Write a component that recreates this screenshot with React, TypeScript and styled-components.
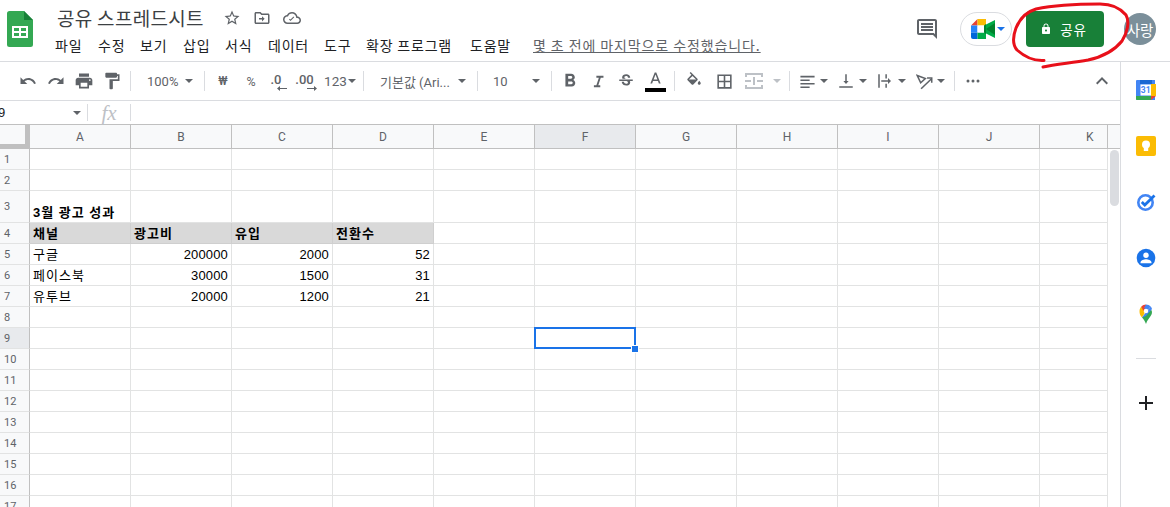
import React from "react";
import styled, { createGlobalStyle } from "styled-components";

const UI = `Roboto, "Noto Sans CJK KR", sans-serif`;
const CELL = `"Liberation Sans", "Noto Sans CJK KR", sans-serif`;
const HEADER_GRAY = "#5f6368";

const Global = createGlobalStyle`
  html, body { margin: 0; padding: 0; background: #fff; }
  #root { width: 1170px; height: 507px; overflow: hidden; }
`;

const Page = styled.div`
  position: relative;
  width: 1170px;
  height: 507px;
  overflow: hidden;
  display: flex;
  flex-direction: column;
  font-family: ${UI};
`;

const TopBar = styled.header`
  height: 61px;
  flex: none;
  display: flex;
  align-items: flex-start;
  border-bottom: 1px solid #dadce0;
  box-sizing: content-box;
`;
const LogoBox = styled.div`
  width: 26px;
  height: 36px;
  margin: 11px 22px 0 7px;
  flex: none;
`;
const TitleBlock = styled.div`
  display: flex;
  flex-direction: column;
  flex: 1;
  min-width: 0;
`;
const TitleRow = styled.div`
  display: flex;
  align-items: center;
  height: 24px;
  margin-top: 6px;
`;
const Title = styled.div`
  font-family: "Noto Sans CJK KR", sans-serif;
  font-size: 19px;
  line-height: 24px;
  color: #3c4043;
  width: 160px;
  margin-left: 2px;
  letter-spacing: 0.3px;
`;
const TitleIcon = styled.span`
  width: 30px;
  display: flex;
  justify-content: center;
  color: #5f6368;
`;
const MenuRow = styled.nav`
  display: flex;
  align-items: center;
  height: 22px;
  margin-top: 4px;
`;
const MenuItem = styled.span<{ $w: number }>`
  font-family: "Noto Sans CJK KR", sans-serif;
  font-size: 14px;
  letter-spacing: 0.8px;
  color: #202124;
  width: ${(p) => p.$w}px;
  white-space: nowrap;
`;
const LastEdit = styled.span`
  font-family: "Noto Sans CJK KR", sans-serif;
  font-size: 14px;
  letter-spacing: 0.9px;
  color: #5f6368;
  text-decoration: underline;
  white-space: nowrap;
  margin-left: 5px;
`;
const RightGroup = styled.div`
  display: flex;
  align-items: center;
  height: 36px;
  margin-top: 11px;
  flex: none;
`;
const CommentBtn = styled.span`
  display: flex;
  color: #5f6368;
  margin-right: 21px;
`;
const MeetPill = styled.div`
  width: 52px;
  height: 34px;
  border: 1px solid #dadce0;
  border-radius: 18px;
  display: flex;
  align-items: center;
  gap: 2px;
  padding-left: 10px;
  box-sizing: border-box;
  margin-right: 14px;
`;
const ShareButton = styled.button`
  width: 78px;
  height: 36px;
  background: #188038;
  border: none;
  border-radius: 4px;
  color: #fff;
  display: flex;
  align-items: center;
  justify-content: center;
  gap: 8px;
  padding: 0 3px 0 0;
  font-family: "Noto Sans CJK KR", sans-serif;
  font-size: 13.5px;
  letter-spacing: 0.9px;
  margin-right: 20px;
`;
const Avatar = styled.div`
  width: 32px;
  height: 32px;
  border-radius: 50%;
  background: #7b8f9a;
  color: #fff;
  font-family: "Noto Sans CJK KR", sans-serif;
  font-size: 14.5px;
  overflow: hidden;
  display: flex;
  align-items: center;
  justify-content: center;
  white-space: nowrap;
  margin-right: 14px;
`;

const Body = styled.div`
  flex: 1;
  display: flex;
  min-height: 0;
`;
const Main = styled.main`
  width: 1120px;
  flex: none;
  display: flex;
  flex-direction: column;
  min-height: 0;
`;
const SidePanel = styled.aside`
  flex: 1;
  border-left: 1px solid #dadce0;
  display: flex;
  flex-direction: column;
  align-items: center;
`;
const SideIcon = styled.div`
  height: 56px;
  flex: none;
  display: flex;
  align-items: center;
  justify-content: center;
`;
const SideDivider = styled.div`
  width: 20px;
  height: 1px;
  background: #dadce0;
  margin-top: 16px;
  margin-bottom: 16px;
`;

const Toolbar = styled.div`
  height: 38px;
  flex: none;
  display: flex;
  align-items: center;
  padding: 0 4px 0 14px;
  border-bottom: 1px solid #dadce0;
`;
const Tool = styled.span<{ $w?: number; $dim?: boolean }>`
  width: ${(p) => p.$w ?? 28}px;
  height: 24px;
  flex: none;
  display: flex;
  align-items: center;
  justify-content: center;
  color: ${(p) => (p.$dim ? "#bdc1c6" : "#5f6368")};
  font-size: 12.5px;
`;
const Sep = styled.span`
  width: 1px;
  height: 20px;
  background: #dadce0;
  margin: 0 4px;
  flex: none;
`;
const SelectTool = styled.span<{ $w: number; $pad: number }>`
  width: ${(p) => p.$w}px;
  padding-left: ${(p) => p.$pad}px;
  padding-right: 7px;
  box-sizing: border-box;
  flex: none;
  display: flex;
  align-items: center;
  justify-content: space-between;
  color: #5f6368;
  font-size: 13px;
  white-space: nowrap;
`;
const CaretGroup = styled.span`
  width: 39px;
  flex: none;
  display: flex;
  align-items: center;
  color: #5f6368;
`;
const CaretIcon = styled.span`
  width: 26px;
  display: flex;
  justify-content: center;
`;
const Caret = styled.span<{ $dim?: boolean; $blue?: boolean }>`
  width: 0;
  height: 0;
  flex: none;
  border-left: 4px solid transparent;
  border-right: 4px solid transparent;
  border-top: 4px solid ${(p) => (p.$blue ? "#1a73e8" : p.$dim ? "#bdc1c6" : "#5f6368")};
`;
const DecimalTool = styled.span<{ $w: number; $shift: number }>`
  width: ${(p) => p.$w}px;
  flex: none;
  display: flex;
  flex-direction: column;
  align-items: center;
  color: #5f6368;
  font-size: 13px;
  line-height: 13px;
  font-weight: 500;
  position: relative;
  top: 1px;
  svg {
    margin-left: ${(p) => p.$shift}px;
  }
`;
const DecimalText = styled.span<{ $shift: number }>`
  margin-left: ${(p) => p.$shift}px;
`;
const Spacer = styled.span`
  flex: 1;
`;
const NumTool = styled(Tool)`
  gap: 1px;
  font-size: 13.5px;
`;
const Won = styled.span`
  font-weight: 500;
  font-size: 12px;
`;
const ColorStack = styled.span`
  display: flex;
  flex-direction: column;
  align-items: center;
  color: #5f6368;
`;
const ColorBar = styled.span`
  width: 21px;
  height: 4px;
  background: #000;
  margin-top: -1px;
`;

const FormulaBar = styled.div`
  height: 23px;
  flex: none;
  display: flex;
  align-items: center;
  border-bottom: 1px solid #c0c0c0;
`;
const NameBox = styled.div`
  width: 87px;
  flex: none;
  display: flex;
  align-items: center;
  justify-content: space-between;
  padding-right: 6px;
  box-sizing: border-box;
  font-size: 13px;
  color: #202124;
  font-family: ${CELL};
`;
const NameText = styled.span`
  margin-left: -2px;
`;
const FormulaSep = styled.span`
  width: 1px;
  height: 17px;
  background: #dadce0;
  flex: none;
`;
const Fx = styled.span`
  width: 42px;
  text-align: center;
  font-family: "Liberation Serif", serif;
  font-style: italic;
  font-size: 21px;
  line-height: 20px;
  color: #bdc1c6;
`;

const Grid = styled.div`
  flex: 1;
  min-height: 0;
  position: relative;
  overflow: hidden;
  display: grid;
  grid-template-columns: 30px repeat(10, 101px) 68px 12px;
  grid-template-rows: 24px 21px 21px 32px repeat(14, 21px);
  font-family: ${CELL};
`;
const Corner = styled.div`
  background-color: #f8f9fa;
  background-image: linear-gradient(#c0c0c0, #c0c0c0), linear-gradient(#c0c0c0, #c0c0c0);
  background-size: 5px 22px, 30px 4px;
  background-position: 25px 0, 0 19px;
  background-repeat: no-repeat;
  border-right: 1px solid #c0c0c0;
  border-bottom: 1px solid #c0c0c0;
`;
const ColHead = styled.div<{ $sel?: boolean; $cut?: boolean }>`
  background: ${(p) => (p.$sel ? "#e8eaed" : "#f8f9fa")};
  border-right: 1px solid #c0c0c0;
  border-bottom: 1px solid #c0c0c0;
  color: ${HEADER_GRAY};
  font-family: ${UI};
  font-size: 12px;
  display: flex;
  align-items: center;
  justify-content: ${(p) => (p.$cut ? "flex-start" : "center")};
  padding-left: ${(p) => (p.$cut ? 46 : 0)}px;
`;
const RowHead = styled.div<{ $sel?: boolean }>`
  background: ${(p) => (p.$sel ? "#e8eaed" : "#f8f9fa")};
  border-right: 1px solid #c0c0c0;
  border-bottom: 1px solid #e2e3e3;
  color: ${HEADER_GRAY};
  font-family: ${UI};
  font-size: 11px;
  display: flex;
  align-items: center;
  padding-left: 4px;
`;
const Cell = styled.div<{ $bold?: boolean; $right?: boolean; $fill?: boolean }>`
  border-right: 1px solid ${(p) => (p.$fill ? "#cfcfcf" : "#e2e3e3")};
  border-bottom: 1px solid ${(p) => (p.$fill ? "#cfcfcf" : "#e2e3e3")};
  background: ${(p) => (p.$fill ? "#d9d9d9" : "#fff")};
  font-size: 13px;
  font-weight: ${(p) => (p.$bold ? 700 : 400)};
  color: #000;
  padding: 0 3px 0 3px;
  display: flex;
  align-items: flex-end;
  justify-content: ${(p) => (p.$right ? "flex-end" : "flex-start")};
  white-space: nowrap;
  line-height: 19px;
  letter-spacing: ${(p) => (p.$right ? "0.15px" : "1px")};
`;
const ScrollGutter = styled.div`
  grid-row: 2 / -1;
  grid-column: 13;
  padding: 1px 1px 0 2px;
`;
const ScrollHead = styled.div`
  background: #f8f9fa;
  border-bottom: 1px solid #c0c0c0;
`;
const ScrollThumb = styled.div`
  height: 56px;
  border-radius: 5px;
  background: #dadce0;
`;
const Selection = styled.div`
  grid-column: 7 / 8;
  grid-row: 10 / 11;
  position: absolute;
  inset: -1px 0 0 -1px;
  border: 2px solid #1a73e8;
`;
const Handle = styled.div`
  position: absolute;
  right: -5px;
  bottom: -6px;
  width: 6px;
  height: 6px;
  background: #1a73e8;
  border: 1px solid #fff;
`;
const Scribble = styled.svg`
  position: absolute;
  left: 0;
  top: 0;
  pointer-events: none;
`;

const Ico = ({ d, s = 18, c = "currentColor" }: { d: string; s?: number; c?: string }) => (
  <svg width={s} height={s} viewBox="0 0 24 24" fill={c}>
    <path d={d} />
  </svg>
);

const P = {
  undo: "M12.5 8c-2.65 0-5.05.99-6.9 2.6L2 7v9h9l-3.62-3.62c1.39-1.16 3.16-1.88 5.12-1.88 3.54 0 6.55 2.31 7.6 5.5l2.37-.78C21.08 11.03 17.15 8 12.5 8z",
  redo: "M18.4 10.6C16.55 8.99 14.15 8 11.5 8c-4.65 0-8.58 3.03-9.96 7.22L3.9 16c1.05-3.19 4.05-5.5 7.6-5.5 1.95 0 3.73.72 5.12 1.88L13 16h9V7l-3.6 3.6z",
  print: "M19 8H5c-1.66 0-3 1.34-3 3v6h4v4h12v-4h4v-6c0-1.66-1.34-3-3-3zm-3 11H8v-5h8v5zm3-7c-.55 0-1-.45-1-1s.45-1 1-1 1 .45 1 1-.45 1-1 1zm-1-9H6v4h12V3z",
  paint: "M18 4V3c0-.55-.45-1-1-1H5c-.55 0-1 .45-1 1v4c0 .55.45 1 1 1h12c.55 0 1-.45 1-1V6h1v4H9v11c0 .55.45 1 1 1h2c.55 0 1-.45 1-1v-9h8V4h-3z",
  bold: "M15.6 10.79c.97-.67 1.65-1.77 1.65-2.79 0-2.26-1.75-4-4-4H7v14h7.04c2.09 0 3.71-1.7 3.71-3.79 0-1.52-.86-2.82-2.15-3.42zM10 6.5h3c.83 0 1.5.67 1.5 1.5s-.67 1.5-1.5 1.5h-3v-3zm3.5 9H10v-3h3.5c.83 0 1.5.67 1.5 1.5s-.67 1.5-1.5 1.5z",
  italic: "M9 4v2.600h3.500L9 17.400H5.500V20h9v-2.600H11.700L15.200 6.600H19V4z",
  strike: "M6.85 7.08C6.85 4.37 9.45 3 12.24 3c1.64 0 3 .49 3.9 1.28.77.65 1.46 1.73 1.46 3.24h-3.01c0-.31-.05-.59-.15-.85-.29-.86-1.2-1.28-2.25-1.28-1.86 0-2.34 1.02-2.34 1.7 0 .48.25.88.74 1.21.38.25.77.48 1.41.7H7.39c-.21-.34-.54-.89-.54-1.92zM21 12v-2H3v2h9.62c1.15.45 1.96.75 1.96 1.97 0 1-.81 1.67-2.28 1.67-1.54 0-2.93-.54-2.93-2.51H6.4c0 .55.08 1.13.24 1.58.81 2.29 3.29 3.3 5.67 3.3 2.27 0 5.3-.89 5.3-4.05 0-.3-.01-1.16-.48-1.96H21z",
  textA: "M11 3L5.5 17h2.25l1.12-3h6.25l1.12 3h2.25L13 3h-2zm-1.38 9L12 5.67 14.38 12H9.62z",
  fill: "M16.56 8.94L7.62 0 6.21 1.41l2.38 2.38-5.15 5.15c-.59.59-.59 1.54 0 2.12l5.5 5.5c.29.29.68.44 1.06.44s.77-.15 1.06-.44l5.5-5.5c.59-.58.59-1.53 0-2.12zM5.21 10L10 5.21 14.79 10H5.21zM19 11.5s-2 2.17-2 3.5c0 1.1.9 2 2 2s2-.9 2-2c0-1.33-2-3.5-2-3.5z",
  borders: "M3 3v18h18V3H3zm8 16H5v-6h6v6zm0-8H5V5h6v6zm8 8h-6v-6h6v6zm0-8h-6V5h6v6z",
  align: "M2 4h20v2.200H2zM2 9h13v2.200H2zM2 14h20v2.200H2zM2 19h13v2.200H2z",
  valign: "M15.500 12h-2.500V3h-2v9H8.500l3.500 4zM3 19v2h18v-2z",
  wrap: "M3 3h2v18H3zM12.500 3h2v5.500h-2zM12.500 15.500h2V21h-2zM7 11h9V8l4 4-4 4v-3H7z",
  chevron: "M12 8l-6 6 1.41 1.41L12 10.83l4.59 4.58L18 14z",
  star: "M22 9.24l-7.19-.62L12 2 9.19 8.63 2 9.24l5.46 4.73L5.82 21 12 17.27 18.18 21l-1.63-7.03L22 9.24zM12 15.4l-3.76 2.27 1-4.28-3.32-2.88 4.38-.38L12 6.1l1.71 4.04 4.38.38-3.32 2.88 1 4.28L12 15.4z",
  move: "M20 6h-8l-2-2H4c-1.1 0-2 .9-2 2v12c0 1.1.9 2 2 2h16c1.1 0 2-.9 2-2V8c0-1.1-.9-2-2-2zm0 12H4V6h5.17l2 2H20v10zM12 9.5v2.5H8v2h4v2.5l3.5-3.5z",
  cloud: "M19.35 10.04C18.67 6.59 15.64 4 12 4 9.11 4 6.6 5.64 5.35 8.04 2.34 8.36 0 10.91 0 14c0 3.31 2.69 6 6 6h13c2.76 0 5-2.24 5-5 0-2.64-2.05-4.78-4.65-4.96zM19 18H6c-2.21 0-4-1.79-4-4 0-2.05 1.53-3.76 3.56-3.97l1.07-.11.5-.95C8.08 7.14 9.94 6 12 6c2.62 0 4.88 1.86 5.39 4.43l.3 1.5 1.53.11c1.56.1 2.78 1.41 2.78 2.96 0 1.65-1.35 3-3 3zM10 16l-2-2 1-1 1 1 4-4 1 1z",
  comment: "M21.99 4c0-1.1-.89-2-1.99-2H4c-1.1 0-2 .9-2 2v12c0 1.1.9 2 2 2h14l4 4-.01-18zM20 4v13.17L18.83 16H4V4h16zM6 12h12v2H6zm0-3h12v2H6zm0-3h12v2H6z",
  lock: "M18 8h-1V6c0-2.76-2.24-5-5-5S7 3.24 7 6v2H6c-1.1 0-2 .9-2 2v10c0 1.1.9 2 2 2h12c1.1 0 2-.9 2-2V10c0-1.1-.9-2-2-2zm-6 9c-1.1 0-2-.9-2-2s.9-2 2-2 2 .9 2 2-.9 2-2 2zm3.1-9H8.9V6c0-1.71 1.39-3.1 3.1-3.1 1.71 0 3.1 1.39 3.1 3.1v2z",
};

const RotateIcon = () => (
  <svg width="17" height="17" viewBox="0 0 20 20" fill="none" stroke="currentColor" strokeWidth="1.800">
    <path d="M1.500 3L11 6.500 5.500 11.500z" />
    <path d="M6 18.500L18 7" />
    <path d="M13 6h5.500v5.500" />
  </svg>
);

const SheetsLogo = () => (
  <svg width="26" height="36" viewBox="0 0 26 36">
    <path d="M2.5 0H17l9 9v24.5a2.5 2.5 0 0 1-2.5 2.5h-21A2.5 2.5 0 0 1 0 33.5v-31A2.5 2.5 0 0 1 2.5 0z" fill="#34a853" />
    <path d="M17 0l9 9h-9z" fill="#188038" />
    <path d="M5 15h16v12H5z" fill="#fff" />
    <path d="M7 17h5v3H7zM14 17h5v3h-5zM7 22h5v3H7zM14 22h5v3h-5z" fill="#34a853" />
  </svg>
);

const MeetLogo = () => (
  <svg width="24" height="20" viewBox="0 0 24 20">
    <path d="M0 6.5L6.5 0v6.5z" fill="#ea4335" />
    <path d="M6.5 0H15v6.5H6.5z" fill="#fbbc04" />
    <path d="M0 6.5h6.5v7H0z" fill="#2684fc" />
    <path d="M0 13.5h6.5V20H2a2 2 0 0 1-2-2z" fill="#0066da" />
    <path d="M6.5 13.5H15V20H6.5z" fill="#00ac47" />
    <path d="M6.5 6.5H13v7H6.5z" fill="#fff" />
    <path d="M13 6.5L15 5 15 15l-2-1.5z" fill="#00832d" />
    <path d="M15 5.5L24 1v18l-9-4.5z" fill="#00ac47" />
    <path d="M15 10l9-6v12z" fill="#00832d" />
  </svg>
);

const CalendarIcon = () => (
  <svg width="20" height="20" viewBox="0 0 20 20">
    <path d="M1 0h18v20H1a1 1 0 0 1-1-1V1a1 1 0 0 1 1-1z" fill="#4285f4" />
    <path d="M4 0h12v4H4z" fill="#1967d2" />
    <path d="M15 4h5v12h-5z" fill="#fbbc04" />
    <path d="M0 16h15v4H1a1 1 0 0 1-1-1z" fill="#34a853" />
    <path d="M15 16h5l-5 4z" fill="#ea4335" />
    <path d="M4.5 4.5h10.5v11H4.5z" fill="#fff" />
    <text x="9.7" y="13" textAnchor="middle" fontFamily="Roboto, sans-serif" fontSize="8.5" fontWeight="700" fill="#4285f4">31</text>
  </svg>
);
const KeepIcon = () => (
  <svg width="20" height="20" viewBox="0 0 20 20">
    <rect width="20" height="20" rx="2" fill="#fbbc04" />
    <circle cx="10" cy="8.5" r="4" fill="#fff" />
    <rect x="7.8" y="12" width="4.4" height="3" fill="#fff" />
  </svg>
);
const TasksIcon = () => (
  <svg width="20" height="20" viewBox="0 0 20 20">
    <circle cx="9.5" cy="10.5" r="7.2" fill="none" stroke="#4285f4" strokeWidth="2.6" />
    <path d="M5.8 10l3 3L18.5 3.5" fill="none" stroke="#1a73e8" strokeWidth="2.8" />
  </svg>
);
const ContactsIcon = () => (
  <svg width="20" height="20" viewBox="0 0 20 20">
    <circle cx="10" cy="10" r="9.3" fill="#1a73e8" />
    <circle cx="10" cy="7.3" r="2.7" fill="#fff" />
    <path d="M4.5 14.5c0-2 3.6-3.2 5.5-3.2s5.5 1.2 5.5 3.2v.7h-11z" fill="#fff" />
  </svg>
);
const MapsIcon = () => (
  <svg width="14" height="20" viewBox="0 0 14 20">
    <path d="M7 20c-1-3-2.5-5-4-6.5L7 9l3.7-4.5C13.100 6 13.500 8.500 12.500 10.500 11 13.500 8 16 7 20z" fill="#34a853" />
    <path d="M3 13.500C1.500 12 0.500 10.500 0.500 7c0-1.800.700-3.200 1.700-4.300L7 7z" fill="#fbbc04" />
    <path d="M2.200 2.700C3.500 1.200 5.200 .4 7 .4L7.500 4 4.500 7z" fill="#ea4335" />
    <path d="M7 .4c1.800 0 3.600 .8 4.700 2.100L8.500 6.500 5 4z" fill="#4285f4" />
    <path d="M11.700 2.500c.5.600 1 1.500 1.300 2.500L7 12 3 13.500 9 6z" fill="#4285f4" />
    <circle cx="7" cy="7" r="2.300" fill="#fff" />
  </svg>
);
const MergeIcon = () => (
  <svg width="18" height="16" viewBox="0 0 18 16" fill="#bdc1c6">
    <path d="M0 0h18v2H0zM0 14h18v2H0zM0 0h2v4H0zM16 0h2v4h-2zM0 12h2v4H0zM16 12h2v4h-2zM0 7h6v2H0zM12 7h6v2h-6zM8 4h2v8H8z" />
  </svg>
);

const menus: [string, number][] = [
  ["파일", 43],
  ["수정", 42],
  ["보기", 43],
  ["삽입", 42],
  ["서식", 43],
  ["데이터", 56],
  ["도구", 42],
  ["확장 프로그램", 104],
  ["도움말", 58],
];

const columns = ["A", "B", "C", "D", "E", "F", "G", "H", "I", "J", "K"];
type CellData = { t: string; b?: boolean; r?: boolean; f?: boolean };
const data: Record<number, CellData[]> = {
  3: [{ t: "3월 광고 성과", b: true }],
  4: [
    { t: "채널", b: true, f: true },
    { t: "광고비", b: true, f: true },
    { t: "유입", b: true, f: true },
    { t: "전환수", b: true, f: true },
  ],
  5: [{ t: "구글" }, { t: "200000", r: true }, { t: "2000", r: true }, { t: "52", r: true }],
  6: [{ t: "페이스북" }, { t: "30000", r: true }, { t: "1500", r: true }, { t: "31", r: true }],
  7: [{ t: "유투브" }, { t: "20000", r: true }, { t: "1200", r: true }, { t: "21", r: true }],
};
const rows = Array.from({ length: 17 }, (_, i) => i + 1);

export default function App() {
  return (
    <Page>
      <Global />
      <TopBar>
        <LogoBox>
          <SheetsLogo />
        </LogoBox>
        <TitleBlock>
          <TitleRow>
            <Title>공유 스프레드시트</Title>
            <TitleIcon><Ico d={P.star} /></TitleIcon>
            <TitleIcon><Ico d={P.move} /></TitleIcon>
            <TitleIcon><Ico d={P.cloud} /></TitleIcon>
          </TitleRow>
          <MenuRow>
            {menus.map(([m, w]) => (
              <MenuItem key={m} $w={w}>{m}</MenuItem>
            ))}
            <LastEdit>몇 초 전에 마지막으로 수정했습니다.</LastEdit>
          </MenuRow>
        </TitleBlock>
        <RightGroup>
          <CommentBtn><Ico d={P.comment} s={24} /></CommentBtn>
          <MeetPill>
            <MeetLogo />
            <Caret $blue />
          </MeetPill>
          <ShareButton>
            <Ico d={P.lock} s={12} />
            공유
          </ShareButton>
          <Avatar>사랑</Avatar>
        </RightGroup>
      </TopBar>
      <Body>
        <Main>
          <Toolbar>
            <Tool><Ico d={P.undo} /></Tool>
            <Tool><Ico d={P.redo} /></Tool>
            <Tool><Ico d={P.print} s={20} /></Tool>
            <Tool><Ico d={P.paint} s={20} /></Tool>
            <Sep />
            <SelectTool $w={65} $pad={12}>100%<Caret /></SelectTool>
            <Sep />
            <Tool><Won>₩</Won></Tool>
            <Tool>%</Tool>
            <DecimalTool $w={26} $shift={8}>
              <DecimalText $shift={-4}>.0</DecimalText>
              <svg width="10" height="5" viewBox="0 0 10 5"><path d="M0 2.500L3 0v2h7v1H3v2z" fill="currentColor" /></svg>
            </DecimalTool>
            <DecimalTool $w={30} $shift={12}>
              <DecimalText $shift={-3}>.00</DecimalText>
              <svg width="10" height="5" viewBox="0 0 10 5"><path d="M10 2.500L7 0v2H0v1h7v2z" fill="currentColor" /></svg>
            </DecimalTool>
            <NumTool $w={38}>123<Caret /></NumTool>
            <Sep />
            <SelectTool $w={105} $pad={12}>기본값 (Ari...<Caret /></SelectTool>
            <Sep />
            <SelectTool $w={65} $pad={11}>10<Caret /></SelectTool>
            <Sep />
            <Tool><Ico d={P.bold} s={22} /></Tool>
            <Tool><Ico d={P.italic} s={17} /></Tool>
            <Tool><Ico d={P.strike} s={18} /></Tool>
            <Tool $w={30}>
              <ColorStack>
                <Ico d={P.textA} s={19} />
                <ColorBar />
              </ColorStack>
            </Tool>
            <Sep />
            <Tool $w={30}><Ico d={P.fill} s={18} /></Tool>
            <Tool $w={30}><Ico d={P.borders} s={19} /></Tool>
            <Tool $w={30} $dim><MergeIcon /></Tool>
            <Tool $w={16}><Caret $dim /></Tool>
            <Sep />
            <CaretGroup><CaretIcon><Ico d={P.align} s={17} /></CaretIcon><Caret /></CaretGroup>
            <CaretGroup><CaretIcon><Ico d={P.valign} s={18} /></CaretIcon><Caret /></CaretGroup>
            <CaretGroup><CaretIcon><Ico d={P.wrap} s={18} /></CaretIcon><Caret /></CaretGroup>
            <CaretGroup><CaretIcon><RotateIcon /></CaretIcon><Caret /></CaretGroup>
            <Sep />
            <Tool>
              <svg width="14" height="4" viewBox="0 0 14 4" fill="currentColor">
                <circle cx="2" cy="2" r="1.500" /><circle cx="7" cy="2" r="1.500" /><circle cx="12" cy="2" r="1.500" />
              </svg>
            </Tool>
            <Spacer />
            <Tool><Ico d={P.chevron} s={24} /></Tool>
          </Toolbar>
          <FormulaBar>
            <NameBox><NameText>9</NameText><Caret /></NameBox>
            <FormulaSep />
            <Fx>fx</Fx>
            <FormulaSep />
          </FormulaBar>
          <Grid>
            <Corner />
            {columns.map((c) => (
              <ColHead key={c} $sel={c === "F"} $cut={c === "K"}>{c}</ColHead>
            ))}
            <ScrollHead />
            {rows.map((r) => (
              <React.Fragment key={r}>
                <RowHead $sel={r === 9}>{r}</RowHead>
                {columns.map((_, i) => {
                  const d = data[r]?.[i];
                  return (
                    <Cell key={i} $bold={d?.b} $right={d?.r} $fill={d?.f}>
                      {d?.t}
                    </Cell>
                  );
                })}
              </React.Fragment>
            ))}
            <ScrollGutter><ScrollThumb /></ScrollGutter>
            <Selection><Handle /></Selection>
          </Grid>
        </Main>
        <SidePanel>
          <SideIcon><CalendarIcon /></SideIcon>
          <SideIcon><KeepIcon /></SideIcon>
          <SideIcon><TasksIcon /></SideIcon>
          <SideIcon><ContactsIcon /></SideIcon>
          <SideIcon><MapsIcon /></SideIcon>
          <SideDivider />
          <SideIcon><Ico d="M19 13h-6v6h-2v-6H5v-2h6V5h2v6h6z" s={24} c="#202124" /></SideIcon>
        </SidePanel>
      </Body>
      <Scribble width="1170" height="72" viewBox="0 0 1170 72">
        <path
          d="M1044 60.500C1036 61 1026 58 1017 50C1012 44 1013 36 1016 28C1020 18 1026 12 1036 9C1055 5 1085 4 1100 4C1112 4 1121 9 1126 15C1130 22 1127 33 1122 41C1114 51 1102 57 1088 60C1072 63 1056 64 1043 67"
          fill="none"
          stroke="#e8101a"
          strokeWidth="3"
          strokeLinecap="round"
        />
      </Scribble>
    </Page>
  );
}
